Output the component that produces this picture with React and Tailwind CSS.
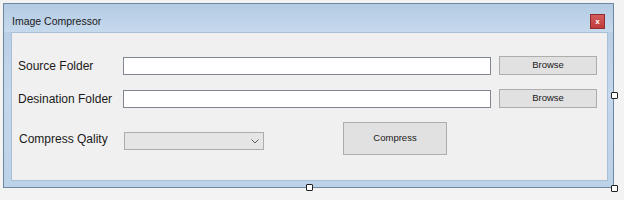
import React from "react";

function Handle({ className }) {
  return (
    <div
      className={
        "absolute w-[7px] h-[7px] bg-white border border-[#222] rounded-[1px] " +
        className
      }
    />
  );
}

export default function App() {
  return (
    <div
      className="relative w-[624px] h-[200px] bg-[#f3f3f3] overflow-hidden"
      style={{ fontFamily: '"Liberation Sans", Arial, sans-serif' }}
    >
      <div className="pt-[3px] pl-[3px]">
        <div className="w-[611px] h-[185px] border border-[#6f879e] bg-gradient-to-b from-[#b5cce4] via-[#c4d7ec] to-[#bcd2e8] flex flex-col">
          {/* title bar */}
          <div className="h-[28px] flex items-center justify-between pl-[8px] pr-[8px] bg-gradient-to-b from-[#b3cbe3] to-[#c6d9ed]">
            <span className="text-[10.5px] text-[#1a1a1a] mt-[8px]">Image Compressor</span>
            <div className="w-[15px] h-[15px] mt-[7px] bg-gradient-to-b from-[#d45c5c] to-[#c13a3a] border border-[#8f2e2e] flex items-center justify-center">
              <span className="text-white text-[8px] font-bold leading-none">x</span>
            </div>
          </div>
          {/* client area */}
          <div className="flex-1 ml-[7px] mr-[5px] mb-[6px] bg-[#f0f0f0] border border-[#a9bfd6] flex flex-col pt-[23px] pl-[6px]">
            <div className="flex items-center h-[19px]">
              <span className="w-[105px] text-[12px] text-[#1a1a1a]">Source Folder</span>
              <div className="w-[368px] h-[18px] bg-white border border-[#7f8690]" />
              <button className="ml-[8px] w-[98px] h-[19px] bg-[#e1e1e1] border border-[#adadad] text-[9.5px] text-[#1a1a1a] flex items-center justify-center">
                Browse
              </button>
            </div>
            <div className="flex items-center h-[19px] mt-[14px]">
              <span className="w-[105px] text-[12px] text-[#1a1a1a]">Desination Folder</span>
              <div className="w-[368px] h-[18px] bg-white border border-[#7f8690]" />
              <button className="ml-[8px] w-[98px] h-[19px] bg-[#e1e1e1] border border-[#adadad] text-[9.5px] text-[#1a1a1a] flex items-center justify-center">
                Browse
              </button>
            </div>
            <div className="flex items-start mt-[14px]">
              <span className="w-[106px] mt-[10px] text-[12px] leading-[14px] text-[#1a1a1a] pl-[1px]">Compress Qality</span>
              <div className="mt-[10px] w-[140px] h-[18px] bg-[#e5e5e5] border border-[#acacac] flex items-center justify-end pr-[4px]">
                <svg width="8" height="5" viewBox="0 0 8 5">
                  <path d="M0.5 0.5 L4 4 L7.5 0.5" fill="none" stroke="#606060" strokeWidth="1" />
                </svg>
              </div>
              <button className="ml-[79px] w-[104px] h-[33px] bg-[#e1e1e1] border border-[#adadad] text-[9.5px] text-[#1a1a1a] flex items-center justify-center">
                Compress
              </button>
            </div>
          </div>
        </div>
      </div>
      <Handle className="left-[306px] top-[184px]" />
      <Handle className="left-[611px] top-[185px]" />
      <Handle className="left-[611px] top-[92px]" />
    </div>
  );
}
